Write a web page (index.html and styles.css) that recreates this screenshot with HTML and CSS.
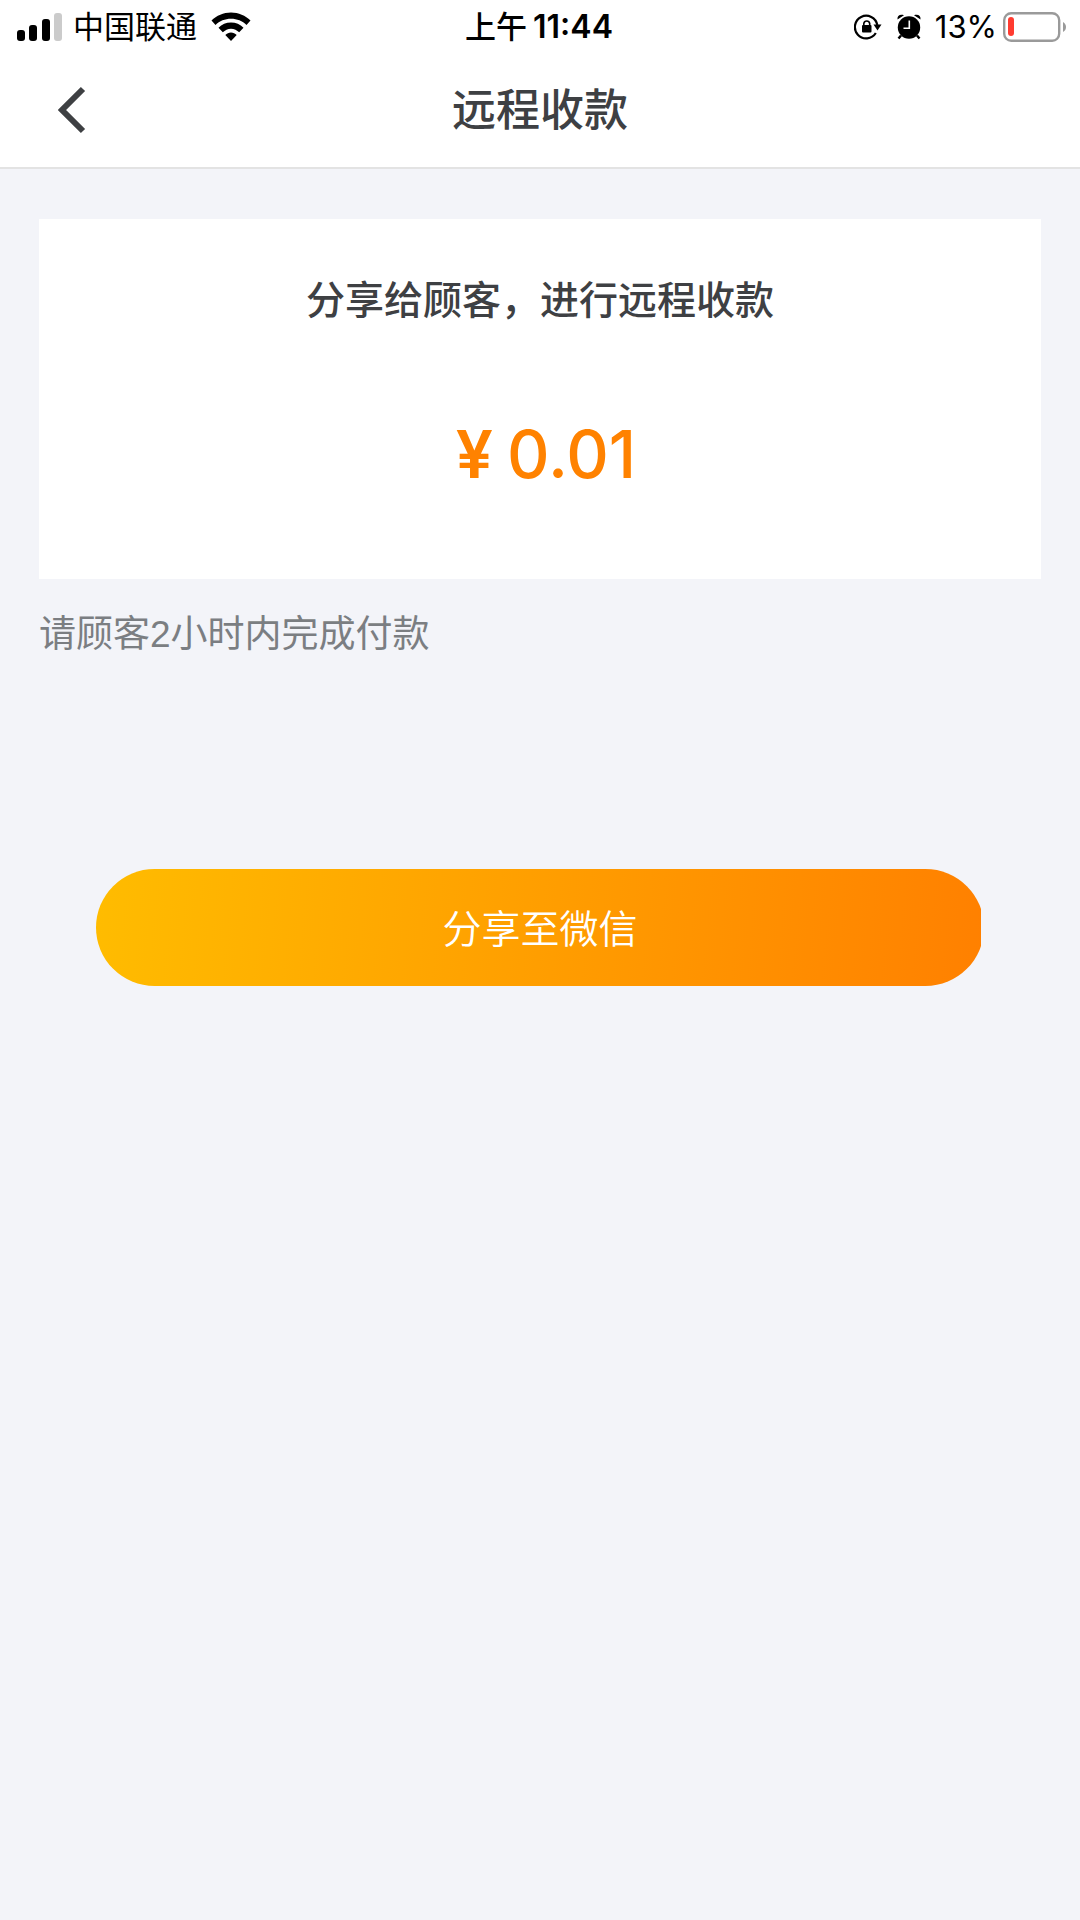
FILE: index.html
```html
<!DOCTYPE html>
<html lang="zh-CN">
<head>
<meta charset="utf-8">
<meta name="viewport" content="width=device-width, initial-scale=1">
<title>远程收款</title>
<link rel="stylesheet" href="styles.css">
</head>
<body>
<header class="top">
  <div class="status">
    <div class="status-left">
      <svg class="signal" width="46" height="28" viewBox="0 0 46 28" aria-hidden="true">
        <rect x="0" y="17" width="8" height="11" rx="3"/>
        <rect x="12" y="12" width="8" height="16" rx="3"/>
        <rect x="25" y="6" width="8" height="22" rx="3"/>
        <rect x="37" y="0" width="8" height="28" rx="3" fill="#cbcbcb"/>
      </svg>
      <span class="carrier">中国联通</span>
      <svg class="wifi" width="40" height="30" viewBox="0 0 40 30" aria-hidden="true">
        <path d="M20 0.500C12.500 0.500 5.500 3.500 0.500 8.500L4.500 13C8.500 9 14 6.800 20 6.800S31.500 9 35.500 13L39.500 8.500C34.500 3.500 27.500 0.500 20 0.500Z"/>
        <path d="M20 10.600C15.200 10.600 10.800 12.500 7.500 15.700L11.800 20.300C14 18.200 16.800 16.700 20 16.700S26 18.200 28.200 20.300L32.500 15.700C29.200 12.500 24.800 10.600 20 10.600Z"/>
        <path d="M20 20.600C17.800 20.600 15.900 21.500 14.300 23L20 29L25.700 23C24.100 21.500 22.200 20.600 20 20.600Z"/>
      </svg>
    </div>
    <div class="time"><span>上午</span><span class="clock">11:44</span></div>
    <div class="status-right">
      <svg class="lock" width="28" height="26" viewBox="0 0 28 26" aria-hidden="true">
        <path d="M21.800 19A11.300 11.300 0 1 1 23.300 11" fill="none" stroke="#000" stroke-width="2.200"/>
        <path d="M19.500 10.500H27.500L23.500 16.500Z"/>
        <rect x="8" y="11" width="9.500" height="7.500" rx="1"/>
        <path d="M9.800 12V9.500A3 3 0 0 1 15.700 9.500V12" fill="none" stroke="#000" stroke-width="1.600"/>
      </svg>
      <svg class="alarm" width="26" height="26" viewBox="0 0 26 26" aria-hidden="true">
        <circle cx="13" cy="13.500" r="11.200"/>
        <path d="M1.500 5.500C1 1.500 4 0 8 1.200ZM24.500 5.500C25 1.500 22 0 18 1.200Z"/>
        <path d="M5 21.500L2.500 24.500M21 21.500L23.500 24.500" stroke="#000" stroke-width="2.400"/>
        <path d="M13.300 6.500V14.300H7.500" fill="none" stroke="#fff" stroke-width="1.600"/>
      </svg>
      <span class="percent">13%</span>
      <svg class="battery" width="64" height="30" viewBox="0 0 64 30" aria-hidden="true">
        <rect x="1.200" y="1.200" width="55" height="27.600" rx="7" fill="none" stroke="#9a9a9a" stroke-width="2.400"/>
        <rect x="5" y="5" width="6" height="19" rx="3" fill="#ff3b30"/>
        <path d="M60 10C64 12 64 18 60 20Z" fill="#9a9a9a"/>
      </svg>
    </div>
  </div>
  <div class="nav">
    <button class="back" type="button" aria-label="返回">
      <svg width="28" height="48" viewBox="0 0 28 48" aria-hidden="true">
        <path d="M25 3L4 24L25 45" fill="none" stroke="#3e4043" stroke-width="6"/>
      </svg>
    </button>
    <h1 class="title">远程收款</h1>
  </div>
</header>
<main class="content">
  <section class="card">
    <h2 class="lead">分享给顾客，进行远程收款</h2>
    <p class="amount"><span class="currency">¥</span><span>0.01</span></p>
  </section>
  <p class="note">请顾客2小时内完成付款</p>
  <button class="share" type="button">分享至微信</button>
</main>
</body>
</html>
```
FILE: styles.css
```css
* {
  box-sizing: border-box;
}

body {
  margin: 0;
  min-height: 100vh;
  background: #f3f4f9;
  color: #3e4043;
  font-family: Inter, "Noto Sans CJK SC", sans-serif;
}

h1,
h2,
p {
  margin: 0;
}

button {
  border: 0;
  padding: 0;
  background: none;
  font-family: inherit;
  cursor: pointer;
}

svg {
  display: block;
  flex: none;
}

.top {
  background: #fff;
  border-bottom: 2px solid #e3e3e3;
}

.status {
  display: grid;
  grid-template-columns: 1fr auto 1fr;
  align-items: center;
  height: 53px;
  padding: 0 13px 0 17px;
  color: #000;
  font-size: 31px;
  line-height: 54px;
}

.status-left,
.status-right {
  display: flex;
  align-items: center;
}

.status-right {
  justify-content: flex-end;
}

.carrier {
  margin: 0 14px 0 10px;
}

.time {
  display: flex;
  gap: 6px;
  padding-right: 6px;
  font-weight: 500;
}

.clock {
  font-size: 32px;
  font-weight: 600;
}

.lock {
  margin-right: 14px;
}

.alarm {
  margin-right: 13px;
}

.percent {
  margin-right: 6px;
}

.nav {
  display: grid;
  grid-template-columns: 1fr auto 1fr;
  align-items: center;
  height: 114px;
  padding: 0 58px;
}

.back {
  justify-self: start;
}

.title {
  font-size: 44px;
  font-weight: 500;
  line-height: 64px;
}

.content {
  padding: 50px 39px;
}

.card {
  display: flex;
  flex-direction: column;
  align-items: center;
  padding: 51px 24px 81px;
  background: #fff;
}

.lead {
  font-size: 39px;
  font-weight: 500;
  line-height: 60px;
}

.amount {
  display: flex;
  gap: 14px;
  margin-top: 80px;
  padding-left: 12px;
  color: #ff8200;
  font-size: 66px;
  font-weight: 500;
  line-height: 88px;
}

.currency {
  font-weight: 600;
}

.note {
  margin-top: 30px;
  color: #7b7e82;
  font-family: "Liberation Sans", "Noto Sans CJK SC", sans-serif;
  font-size: 37px;
  line-height: 52px;
}

/* The pill is trimmed slightly on its right end */
.share {
  display: block;
  width: calc(100% - 114px);
  height: 117px;
  margin: 208px auto 0;
  padding-bottom: 4px;
  border-radius: 59px;
  background: linear-gradient(95deg, #ffbc00, #ff8000);
  clip-path: inset(0 3px 0 0);
  color: #fff;
  font-size: 39px;
  font-weight: 350;
}
```
